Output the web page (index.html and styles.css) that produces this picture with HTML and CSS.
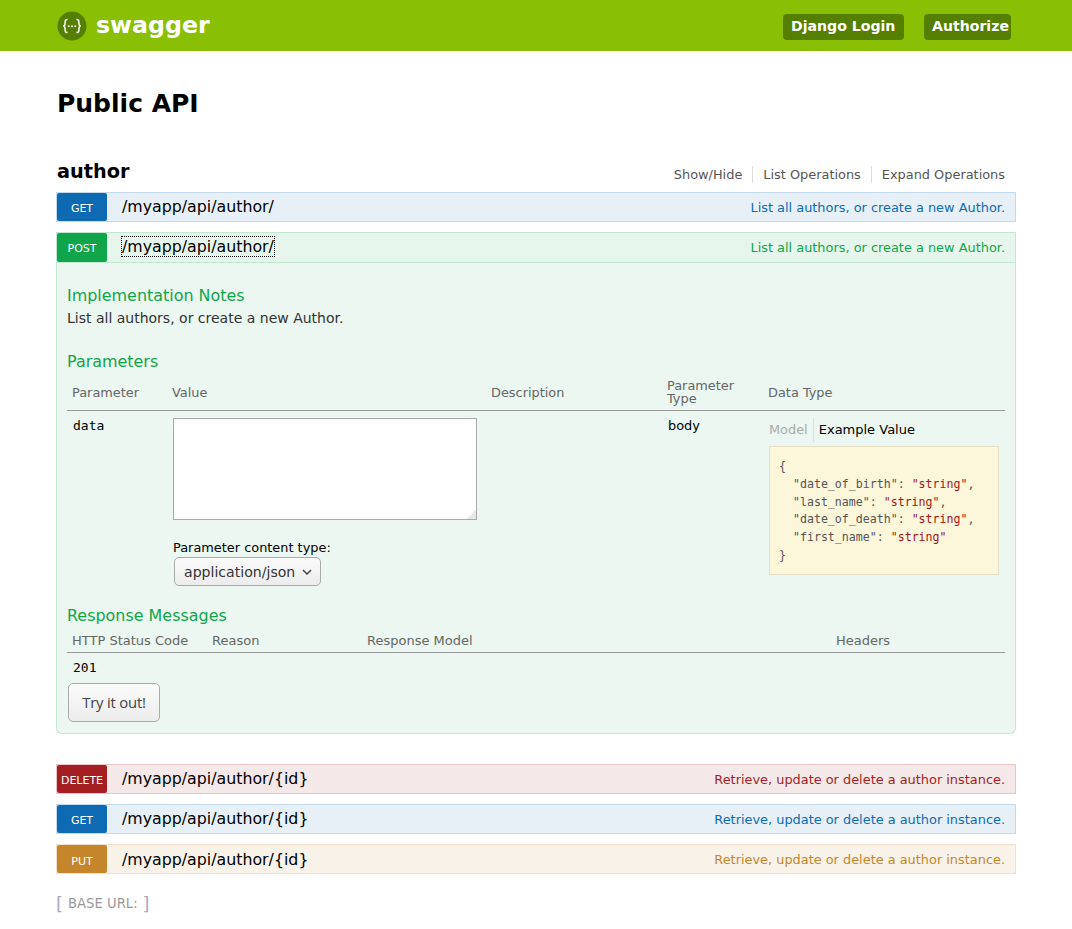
FILE: index.html
```html
<!DOCTYPE html>
<html lang="en">
<head>
    <meta charset="UTF-8">
    <meta name="viewport" content="width=device-width, initial-scale=1.0">
    <title>Public API</title>
    <link rel="stylesheet" href="styles.css">
</head>
<body>
  <header class="topbar">
    <a class="brand" href="#">
      <svg class="logo" width="30" height="30" viewBox="0 0 30 30">
        <circle cx="15" cy="15" r="14.5" fill="#547f00"/>
        <path d="M10.5 8.5c-2 0-2.4 1-2.4 2.6v1.6c0 1.2-.5 2-1.7 2.300 1.200.3 1.700 1.100 1.700 2.300v1.600c0 1.600.4 2.600 2.400 2.600M19.500 8.500c2 0 2.400 1 2.400 2.600v1.600c0 1.200.5 2 1.700 2.300-1.200.3-1.700 1.100-1.700 2.300v1.600c0 1.600-.4 2.600-2.400 2.600" fill="none" stroke="#fff" stroke-width="1.500"/>
        <circle cx="11.700" cy="15.300" r="1" fill="#fff"/>
        <circle cx="15" cy="15.300" r="1" fill="#fff"/>
        <circle cx="18.300" cy="15.300" r="1" fill="#fff"/>
      </svg>
      <span class="brand-name">swagger</span>
    </a>
    <div class="topbar-actions">
      <a class="top-btn" href="#">Django Login</a>
      <a class="top-btn" href="#">Authorize</a>
    </div>
  </header>

  <main class="container">
    <h1>Public API</h1>

    <div class="resource-head">
      <h2>author</h2>
      <ul class="resource-links">
        <li><a href="#">Show/Hide</a></li>
        <li><a href="#">List Operations</a></li>
        <li><a href="#">Expand Operations</a></li>
      </ul>
    </div>

    <div class="op op-get">
      <div class="op-head">
        <span class="verb">GET</span>
        <span class="path">/myapp/api/author/</span>
        <span class="summary">List all authors, or create a new Author.</span>
      </div>
    </div>

    <div class="op op-post">
      <div class="op-head">
        <span class="verb">POST</span>
        <span class="path path-focus">/myapp/api/author/</span>
        <span class="summary">List all authors, or create a new Author.</span>
      </div>
      <div class="op-body">
        <h4 class="notes-title">Implementation Notes</h4>
        <p class="notes">List all authors, or create a new Author.</p>

        <h4 class="params-title">Parameters</h4>
        <div class="params-grid params-head">
          <span>Parameter</span>
          <span>Value</span>
          <span>Description</span>
          <span class="type-head">Parameter<br>Type</span>
          <span>Data Type</span>
        </div>
        <div class="params-grid params-row">
          <code class="param-name">data</code>
          <div class="param-value">
            <textarea class="body-input"></textarea>
            <label class="content-label" for="ctype">Parameter content type:</label>
            <div class="select-wrap">
              <select class="content-select" id="ctype">
                <option>application/json</option>
              </select>
              <svg class="select-arrow" width="10" height="6" viewBox="0 0 10 6">
                <path d="M1 1l4 4 4-4" fill="none" stroke="#444" stroke-width="1.500"/>
              </svg>
            </div>
          </div>
          <span></span>
          <span class="param-type">body</span>
          <div class="param-data">
            <div class="model-tabs">
              <span class="tab tab-model">Model</span>
              <span class="tab tab-example">Example Value</span>
            </div>
            <div class="sample">
              <div class="sample-line">{</div>
              <div class="sample-line">  "date_of_birth": <em>"string"</em>,</div>
              <div class="sample-line">  "last_name": <em>"string"</em>,</div>
              <div class="sample-line">  "date_of_death": <em>"string"</em>,</div>
              <div class="sample-line">  "first_name": <em>"string"</em></div>
              <div class="sample-line">}</div>
            </div>
          </div>
        </div>

        <h4 class="resp-title">Response Messages</h4>
        <div class="resp-grid resp-head">
          <span>HTTP Status Code</span>
          <span>Reason</span>
          <span>Response Model</span>
          <span>Headers</span>
        </div>
        <div class="resp-code">201</div>
        <button class="try-btn">Try it out!</button>
      </div>
    </div>

    <div class="op op-delete">
      <div class="op-head">
        <span class="verb">DELETE</span>
        <span class="path">/myapp/api/author/{id}</span>
        <span class="summary">Retrieve, update or delete a author instance.</span>
      </div>
    </div>

    <div class="op op-get">
      <div class="op-head">
        <span class="verb">GET</span>
        <span class="path">/myapp/api/author/{id}</span>
        <span class="summary">Retrieve, update or delete a author instance.</span>
      </div>
    </div>

    <div class="op op-put">
      <div class="op-head">
        <span class="verb">PUT</span>
        <span class="path">/myapp/api/author/{id}</span>
        <span class="summary">Retrieve, update or delete a author instance.</span>
      </div>
    </div>

    <div class="base-url"><span class="bracket">[</span><span class="base-label">BASE URL:</span><span class="bracket">]</span></div>
  </main>
</body>
</html>
```

FILE: styles.css
```css
html, body {
  margin: 0;
  padding: 0;
  background: #fff;
  font-family: "DejaVu Sans", sans-serif;
  color: #000;
}
a {
  text-decoration: none;
  color: inherit;
}
.topbar {
  height: 51px;
  background: #89bf04;
  display: flex;
  align-items: center;
  justify-content: space-between;
  padding: 0 61px 0 57px;
}
.brand {
  display: flex;
  align-items: center;
  gap: 9px;
  color: #fff;
}
.logo {
  display: block;
}
.brand-name {
  font-size: 23.700px;
  font-weight: bold;
  line-height: 28px;
  margin-bottom: 2px;
}
.topbar-actions {
  display: flex;
  gap: 20px;
  margin-top: 2px;
}
.top-btn {
  display: block;
  height: 26px;
  line-height: 25px;
  padding: 0 0 0 8px;
  width: 121px;
  background: #547f00;
  border-radius: 4px;
  color: #fff;
  font-size: 14.100px;
  font-weight: bold;
  box-sizing: border-box;
  white-space: nowrap;
}
.top-btn:last-child {
  width: 87px;
}
.container {
  padding: 0 56px;
}
h1 {
  margin: 0;
  padding: 38px 0 0 1px;
  font-size: 25px;
  line-height: 30px;
  font-weight: bold;
}
.resource-head {
  display: flex;
  justify-content: space-between;
  align-items: center;
  margin-top: 40px;
  height: 24px;
  margin-bottom: 9px;
}
h2 {
  margin: 0;
  padding-left: 1px;
  font-size: 19.300px;
  font-weight: bold;
}
.resource-links {
  display: flex;
  list-style: none;
  margin: 0;
  padding: 6px 11px 0 0;
  font-size: 12.900px;
  color: #555;
}
.resource-links li {
  padding: 0 10px;
  border-right: 1px solid #ddd;
  line-height: 17px;
}
.resource-links li:last-child {
  border-right: 0;
  padding-right: 0;
}
.op {
  margin-bottom: 10px;
}
.op-head {
  display: flex;
  align-items: center;
  height: 30px;
  box-sizing: border-box;
  border: 1px solid;
  padding-right: 10px;
}
.verb {
  width: 50px;
  height: 28px;
  line-height: 31px;
  flex: none;
  border-radius: 2px;
  text-align: center;
  color: #fff;
  font-size: 11px;
}
.path {
  margin: 0 0 2px 15px;
  font-size: 15.800px;
  line-height: 19px;
}
.summary {
  margin-left: auto;
  font-size: 12.900px;
}
.op-get .op-head { background: #e7f0f7; border-color: #c3d9ec; }
.op-get .verb { background: #0f6ab4; }
.op-get .summary { color: #0f6ab4; }
.op-post .op-head { background: #e7f6ec; border-color: #c3e8d1; height: 31px; }
.op-post .verb { background: #10a54a; height: 29px; }
.op-post .path { margin-bottom: 3px; }
.op-post .summary { color: #10a54a; margin-bottom: 1px; }
.op-delete .op-head { background: #f5e8e8; border-color: #e8c6c7; }
.op-delete .verb { background: #a41e22; }
.op-delete .summary { color: #a41e22; }
.op-put .op-head { background: #f9f2e9; border-color: #f0e0ca; }
.op-put .verb { background: #c5862b; line-height: 33px; }
.op-put .path { margin-bottom: 0; }
.op-put .summary { color: #c5862b; }
.path-focus {
  outline: 1px dotted #000;
}
.op-post {
  margin-bottom: 30px;
}
.op-body {
  background: #ebf7f0;
  border: 1px solid #c3e8d1;
  border-top: 0;
  border-radius: 0 0 6px 6px;
  padding: 0 10px 10px;
  height: 471px;
  box-sizing: border-box;
}
h4 {
  margin: 0;
  font-size: 15.950px;
  font-weight: normal;
  line-height: 19px;
  color: #10a54a;
}
.notes-title {
  padding-top: 23px;
}
.notes {
  margin: 4px 0 0;
  font-size: 14px;
  line-height: 18px;
  color: #333;
}
.params-title {
  margin-top: 25px;
}
.params-grid {
  display: grid;
  font-size: 12.900px;
}
.params-head {
  color: #666;
  margin-top: 8px;
  padding: 0 0 5px 5px;
  height: 26px;
  align-items: center;
  border-bottom: 1px solid #999;
  grid-template-columns: 100px 319px 176px 101px 1fr;
}
.type-head {
  line-height: 13px;
}
.params-row {
  padding: 7px 6px 0 5px;
  grid-template-columns: 101px 320px 175px 100px 1fr;
}
.param-name {
  font-family: "DejaVu Sans Mono", monospace;
  font-size: 13px;
  padding: 0 0 0 1px;
}
.body-input {
  display: block;
  width: 304px;
  height: 102px;
  box-sizing: border-box;
  border: 1px solid #aaa;
  margin: 0;
  resize: none;
  background: linear-gradient(135deg, transparent 50%, #e8e8e8 50%) no-repeat right bottom / 9px 9px, #fff;
}
.content-label {
  display: block;
  margin-top: 20px;
  font-size: 12.900px;
  line-height: 16px;
}
.select-wrap {
  position: relative;
  width: 147px;
  margin: 1px 0 0 1px;
}
.content-select {
  display: block;
  appearance: none;
  width: 147px;
  height: 29px;
  font-family: "DejaVu Sans", sans-serif;
  font-size: 14.100px;
  color: #333;
  padding: 0 0 0 9px;
  border: 1px solid #aaa;
  border-radius: 5px;
  background: linear-gradient(#fbfbfb, #ececec);
}
.select-arrow {
  position: absolute;
  right: 9px;
  top: 12px;
}
.param-type {
  padding-top: 0;
}
.model-tabs {
  display: flex;
  height: 24px;
  margin-bottom: 4px;
}
.tab {
  line-height: 15px;
  padding: 4px 5px 0 1px;
}
.tab-model {
  color: #aaa;
  border-right: 1px solid #ddd;
}
.tab-example {
  padding-left: 5px;
  color: #000;
  font-size: 13px;
}
.sample {
  margin: 0 0 0 1px;
  width: 230px;
  height: 129px;
  box-sizing: border-box;
  padding: 11px 9px 0;
  background: #fcf6db;
  border: 1px solid #e5e0c6;
  font-family: "DejaVu Sans Mono", monospace;
  font-size: 11.600px;
  line-height: 17.800px;
  color: #555;
}
.sample-line {
  white-space: pre;
}
.sample em {
  font-style: normal;
  color: #a31515;
}
.resp-title {
  margin-top: 20px;
}
.resp-grid {
  display: grid;
  grid-template-columns: 140px 155px 469px 1fr;
  font-size: 13px;
  color: #666;
}
.resp-head {
  padding: 0 0 3px 5px;
  margin-top: 8px;
  line-height: 16px;
  border-bottom: 1px solid #999;
}
.resp-code {
  font-family: "DejaVu Sans Mono", monospace;
  font-size: 13px;
  padding: 7px 0 0 6px;
  line-height: 16px;
}
.try-btn {
  display: block;
  margin: 7px 0 0 1px;
  width: 92px;
  height: 39px;
  padding: 0 0 2px;
  border: 1px solid #aaa;
  border-radius: 5px;
  background: linear-gradient(#fbfbfb, #ececec);
  font-family: "Open Sans", sans-serif;
  font-size: 14.900px;
  letter-spacing: -0.2px;
  color: #444;
  cursor: pointer;
}
.base-url {
  display: flex;
  align-items: center;
  margin-top: 20px;
  font-size: 13.200px;
  color: #999;
  line-height: 20px;
}
.base-label {
  margin: 0 5px;
}
.bracket {
  font-size: 18px;
  color: #aab;
}
```
